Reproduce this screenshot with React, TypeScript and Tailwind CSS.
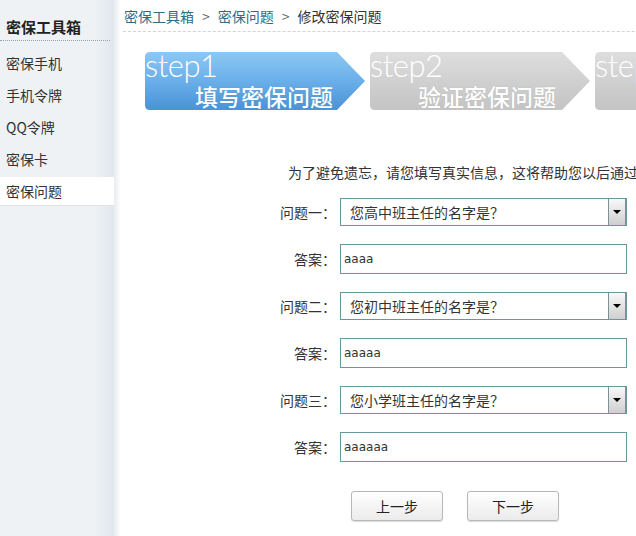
import React from "react";

const menu = ["密保手机", "手机令牌", "QQ令牌", "密保卡", "密保问题"];

const questions = [
  { label: "问题一：", question: "您高中班主任的名字是？", answer: "aaaa" },
  { label: "问题二：", question: "您初中班主任的名字是？", answer: "aaaaa" },
  { label: "问题三：", question: "您小学班主任的名字是？", answer: "aaaaaa" },
];

const steps = [
  { id: "s1", num: "step1", title: "填写密保问题", stops: ["#8cc8f4", "#6aafe9", "#4a92d6"], pl: "pl-[50px]" },
  { id: "s2", num: "step2", title: "验证密保问题", stops: ["#dedede", "#d0d0d0", "#c4c4c4"], pl: "pl-[48px]" },
  { id: "s3", num: "step3", title: "修改密保问题", stops: ["#dedede", "#d0d0d0", "#c4c4c4"], pl: "pl-[48px]" },
];

function StepBanner({ step }: { step: (typeof steps)[number] }) {
  return (
    <div className="relative w-[220px] h-[58px] shrink-0 text-white">
      {/* banner shape */}
      <svg className="absolute inset-0" width="220" height="58" viewBox="0 0 220 58">
        <defs>
          <linearGradient id={step.id} x1="0" y1="0" x2="0" y2="1">
            <stop offset="0" stopColor={step.stops[0]} />
            <stop offset="0.5" stopColor={step.stops[1]} />
            <stop offset="1" stopColor={step.stops[2]} />
          </linearGradient>
        </defs>
        <path d="M5 0 H192 L220 29 L192 58 H5 Q0 58 0 53 V5 Q0 0 5 0 Z" fill={`url(#${step.id})`} />
      </svg>
      <div className="relative">
        <div className="text-[31px] leading-[27px] font-light font-['Lato',sans-serif] tracking-[-0.5px]">
          {step.num}
        </div>
        <div
          className={`mt-[6px] ${step.pl} text-[23px] leading-[23px] font-medium whitespace-nowrap font-['Noto_Sans_CJK_SC',sans-serif] [text-shadow:0_0_1px_rgba(0,0,0,0.15)]`}
        >
          {step.title}
        </div>
      </div>
    </div>
  );
}

function FakeSelect({ value }: { value: string }) {
  return (
    <div className="w-[287px] h-[28px] border border-[#6a969e] bg-white flex items-center">
      <span className="flex-1 pl-[9px] text-[14px] leading-[20px] text-[#333]">{value}</span>
      <span className="w-[18px] h-[26px] border-l border-r border-[#7d9199] bg-gradient-to-b from-[#f8f8f8] to-[#cfcfcf] flex items-center justify-center">
        <span className="w-0 h-0 border-l-[4px] border-r-[4px] border-t-[4px] border-l-transparent border-r-transparent border-t-black" />
      </span>
    </div>
  );
}

export default function App() {
  return (
    <div className="flex w-[636px] h-[536px] overflow-hidden bg-white font-['Noto_Sans_CJK_SC',sans-serif] text-[#333]">
      <aside className="w-[114px] shrink-0 h-full bg-[linear-gradient(to_right,#eef2f5_82%,#e2e7ed)]">
        <div className="pt-[17px] pb-[3px] pl-[6px] mr-[4px] border-b border-dotted border-[#9aa3ab] text-[15px] leading-[20px] font-bold text-[#222]">
          密保工具箱
        </div>
        <ul className="mt-[8px] flex flex-col gap-[3px]">
          {menu.map((m) => (
            <li
              key={m}
              className={
                m === "密保问题"
                  ? "h-[29px] leading-[28px] pl-[6px] text-[14px] bg-white border-b border-[#dfe4ea]"
                  : "h-[29px] leading-[29px] pl-[6px] text-[14px]"
              }
            >
              {m}
            </li>
          ))}
        </ul>
      </aside>

      <main className="flex-1 min-w-0 h-full bg-[linear-gradient(to_right,#e8ecf0,#ffffff_7px)]">
        <div className="w-[800px]">
          <div className="ml-[9px] h-[32px] pt-[6px] pl-[1px] border-b border-dashed border-[#cfd4d8] text-[14px] leading-[20px] whitespace-nowrap">
            <a className="text-[#2f6d85]">密保工具箱</a>
            <span className="mx-[8px] text-[#666]">&gt;</span>
            <a className="text-[#2f6d85]">密保问题</a>
            <span className="mx-[8px] text-[#666]">&gt;</span>
            <span className="text-[#333]">修改密保问题</span>
          </div>

          <div className="flex gap-[5px] ml-[31px] mt-[20px]">
            {steps.map((s) => (
              <StepBanner key={s.id} step={s} />
            ))}
          </div>

          <p className="mt-[52px] ml-[174px] text-[14px] leading-[20px] whitespace-nowrap">
            为了避免遗忘，请您填写真实信息，这将帮助您以后通过密保问题找回帐号。
          </p>

          <form className="mt-[16px] flex flex-col gap-[18px]">
            {questions.map((q) => (
              <React.Fragment key={q.label}>
                <div className="flex items-center">
                  <label className="w-[226px] pr-[4px] text-right text-[14px] leading-[20px]">{q.label}</label>
                  <FakeSelect value={q.question} />
                </div>
                <div className="flex items-center">
                  <label className="w-[226px] pr-[4px] text-right text-[14px] leading-[20px]">答案：</label>
                  <input
                    readOnly
                    value={q.answer}
                    className="w-[287px] h-[30px] border border-[#6a969e] bg-white pl-[3px] text-[12px] text-[#333] font-['DejaVu_Sans',sans-serif] outline-none"
                  />
                </div>
              </React.Fragment>
            ))}
          </form>

          <div className="mt-[29px] ml-[237px] flex gap-[24px]">
            {["上一步", "下一步"].map((b) => (
              <button
                key={b}
                type="button"
                className="w-[92px] h-[30px] border border-[#b8b8b8] rounded-[3px] bg-gradient-to-b from-white to-[#ebebeb] shadow-[0_1px_1px_rgba(0,0,0,0.15)] text-[14px] text-[#222]"
              >
                {b}
              </button>
            ))}
          </div>
        </div>
      </main>
    </div>
  );
}
